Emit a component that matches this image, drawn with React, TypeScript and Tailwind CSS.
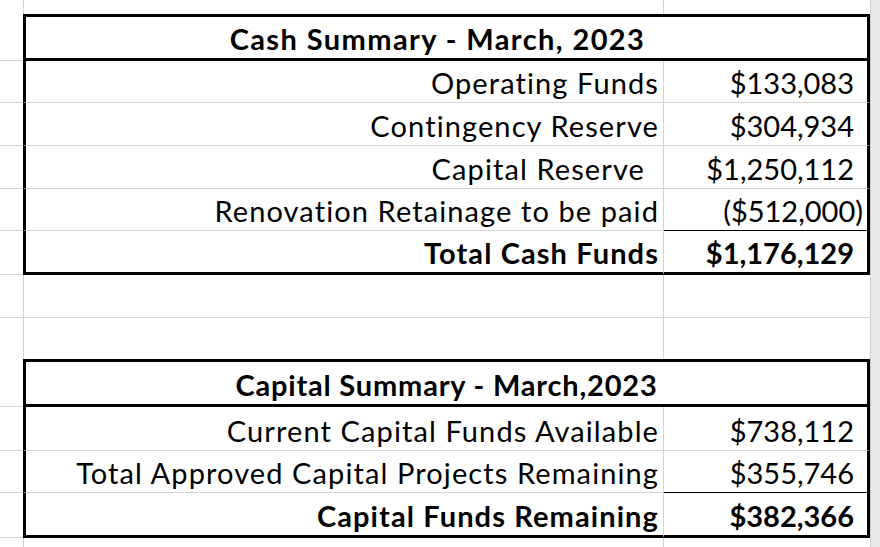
import React from "react";

type Line = "grid" | "thin" | "thick" | "none";

function Strip() {
  return <div className="w-[10px] shrink-0 self-stretch bg-[#e8e8e8] border-l border-[#cfcfcf]" />;
}

function LeftCell({ line }: { line: boolean }) {
  return (
    <div
      className={
        line
          ? "w-[23px] shrink-0 border-b border-[#d4d4d4]"
          : "w-[23px] shrink-0"
      }
    />
  );
}

function EmptyRow({ h, bottom }: { h: string; bottom: boolean }) {
  return (
    <div className={`flex ${h}`}>
      <LeftCell line={bottom} />
      <div
        className={
          bottom
            ? "w-[641px] shrink-0 border-l border-r border-b border-[#d4d4d4]"
            : "w-[641px] shrink-0 border-l border-r border-[#d4d4d4]"
        }
      />
      <div
        className={
          bottom
            ? "w-[206px] shrink-0 border-b border-[#d4d4d4]"
            : "w-[206px] shrink-0"
        }
      />
      <Strip />
    </div>
  );
}

function HeaderRow({ h, text, shift }: { h: string; text: string; shift: string }) {
  return (
    <div className={`flex ${h}`}>
      <LeftCell line={true} />
      <div
        className={`w-[847px] shrink-0 border-[3px] border-black flex items-end justify-center pb-[5px] font-bold ${shift}`}
      >
        {text}
      </div>
      <Strip />
    </div>
  );
}

function DataRow({
  h,
  label,
  value,
  bold,
  leftLine,
  rightLine,
  labelPad,
  neg,
}: {
  h: string;
  label: string;
  value: string;
  bold?: boolean;
  leftLine: Line;
  rightLine: Line;
  labelPad?: string;
  neg?: boolean;
}) {
  const leftB =
    leftLine === "thick"
      ? "border-b-[3px] border-b-black"
      : "border-b border-b-[#d4d4d4]";
  const rightB =
    rightLine === "thick"
      ? "border-b-[3px] border-b-black"
      : rightLine === "thin"
      ? "border-b border-b-black"
      : "border-b border-b-[#d4d4d4]";
  return (
    <div className={`flex ${h} ${bold ? "font-bold" : ""}`}>
      <LeftCell line={true} />
      <div
        className={`w-[641px] shrink-0 border-l-[3px] border-l-black border-r border-r-[#d4d4d4] ${leftB} flex items-end justify-end pb-[5px] tracking-[1.1px] ${
          labelPad ?? "pr-[4px]"
        }`}
      >
        {label}
      </div>
      <div
        className={`w-[206px] shrink-0 border-r-[3px] border-r-black ${rightB} flex items-end justify-end pb-[5px] pr-[13px]`}
      >
        {neg ? (
          <span>
            {value}
            <span className="-mr-[9px]">)</span>
          </span>
        ) : (
          value
        )}
      </div>
      <Strip />
    </div>
  );
}

export default function App() {
  return (
    <div className="w-[880px] h-[547px] overflow-hidden bg-white text-black font-[Lato,sans-serif] text-[29px] leading-none">
      <EmptyRow h="h-[14px]" bottom={false} />
      <HeaderRow h="h-[47px]" text="Cash Summary - March, 2023" shift="pr-[18px] tracking-[1.4px]" />
      <DataRow h="h-[42px]" label="Operating Funds" value="$133,083" leftLine="grid" rightLine="grid" />
      <DataRow h="h-[43px]" label="Contingency Reserve" value="$304,934" leftLine="grid" rightLine="grid" />
      <DataRow
        h="h-[43px]"
        label="Capital Reserve"
        value="$1,250,112"
        leftLine="grid"
        rightLine="grid"
        labelPad="pr-[18px]"
      />
      <DataRow
        h="h-[42px]"
        label="Renovation Retainage to be paid"
        value="($512,000"
        neg
        leftLine="grid"
        rightLine="thin"
      />
      <DataRow
        h="h-[44px]"
        label="Total Cash Funds"
        value="$1,176,129"
        bold
        leftLine="thick"
        rightLine="thick"
      />
      <EmptyRow h="h-[43px]" bottom={true} />
      <EmptyRow h="h-[41px]" bottom={false} />
      <HeaderRow h="h-[48px]" text="Capital Summary - March,2023" shift="tracking-[0.8px]" />
      <DataRow
        h="h-[44px]"
        label="Current Capital Funds Available"
        value="$738,112"
        leftLine="grid"
        rightLine="grid"
      />
      <DataRow
        h="h-[42px]"
        label="Total Approved Capital Projects Remaining"
        value="$355,746"
        leftLine="grid"
        rightLine="thin"
      />
      <DataRow
        h="h-[45px]"
        label="Capital Funds Remaining"
        value="$382,366"
        bold
        leftLine="thick"
        rightLine="thick"
      />
      <EmptyRow h="h-[9px]" bottom={false} />
    </div>
  );
}
